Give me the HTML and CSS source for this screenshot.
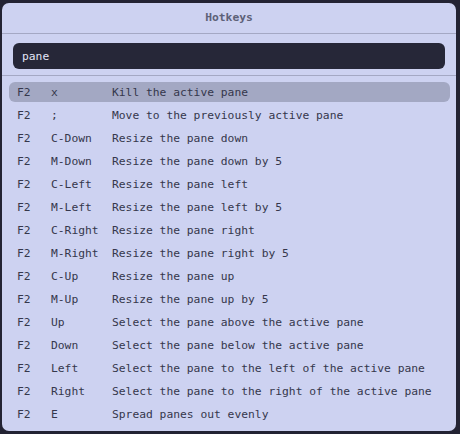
FILE: index.html
```html
<!DOCTYPE html>
<html>
<head>
<meta charset="utf-8">
<link rel="stylesheet" href="styles.css">
</head>
<body>
<div class="panel">
  <div class="header">Hotkeys</div>
  <div class="search"><div class="input">pane</div></div>
  <div class="list">
    <div class="row active"><span class="mod">F2</span><span class="key">x</span><span class="desc">Kill the active pane</span></div>
    <div class="row"><span class="mod">F2</span><span class="key">;</span><span class="desc">Move to the previously active pane</span></div>
    <div class="row"><span class="mod">F2</span><span class="key">C-Down</span><span class="desc">Resize the pane down</span></div>
    <div class="row"><span class="mod">F2</span><span class="key">M-Down</span><span class="desc">Resize the pane down by 5</span></div>
    <div class="row"><span class="mod">F2</span><span class="key">C-Left</span><span class="desc">Resize the pane left</span></div>
    <div class="row"><span class="mod">F2</span><span class="key">M-Left</span><span class="desc">Resize the pane left by 5</span></div>
    <div class="row"><span class="mod">F2</span><span class="key">C-Right</span><span class="desc">Resize the pane right</span></div>
    <div class="row"><span class="mod">F2</span><span class="key">M-Right</span><span class="desc">Resize the pane right by 5</span></div>
    <div class="row"><span class="mod">F2</span><span class="key">C-Up</span><span class="desc">Resize the pane up</span></div>
    <div class="row"><span class="mod">F2</span><span class="key">M-Up</span><span class="desc">Resize the pane up by 5</span></div>
    <div class="row"><span class="mod">F2</span><span class="key">Up</span><span class="desc">Select the pane above the active pane</span></div>
    <div class="row"><span class="mod">F2</span><span class="key">Down</span><span class="desc">Select the pane below the active pane</span></div>
    <div class="row"><span class="mod">F2</span><span class="key">Left</span><span class="desc">Select the pane to the left of the active pane</span></div>
    <div class="row"><span class="mod">F2</span><span class="key">Right</span><span class="desc">Select the pane to the right of the active pane</span></div>
    <div class="row"><span class="mod">F2</span><span class="key">E</span><span class="desc">Spread panes out evenly</span></div>
  </div>
</div>
</body>
</html>
```
FILE: styles.css
```css
html, body {
  margin: 0;
  padding: 0;
  background: #232333;
  height: 100%;
}
body {
  padding: 3px 0 0 2px;
  box-sizing: border-box;
  font-family: "DejaVu Sans Mono", "Liberation Mono", monospace;
  font-size: 11.3px;
}
.panel {
  width: 454px;
  height: 428px;
  background: #cdd2f1;
  border-radius: 7px;
  overflow: hidden;
  display: flex;
  flex-direction: column;
}
.header {
  height: 30px;
  line-height: 30px;
  text-align: center;
  font-weight: bold;
  color: #5d6178;
  border-bottom: 1px solid #a4a8c4;
}
.search {
  padding: 9px 11px 6px 11px;
  border-bottom: 1px solid #a4a8c4;
}
.input {
  height: 26px;
  box-sizing: border-box;
  padding-top: 1px;
  line-height: 26px;
  background: #262738;
  border-radius: 6px;
  padding-left: 9px;
  color: #e2e5f6;
}
.list {
  padding: 6px 6px 0 7px;
  display: flex;
  flex-direction: column;
  gap: 3px;
}
.row {
  height: 20px;
  box-sizing: border-box;
  padding-top: 1px;
  line-height: 20px;
  display: flex;
  padding-left: 8px;
  border-radius: 6px;
  color: #35374c;
  white-space: pre;
}
.row.active {
  background: #a3a8c3;
}
.mod { width: 34px; }
.key { width: 61px; }
```
